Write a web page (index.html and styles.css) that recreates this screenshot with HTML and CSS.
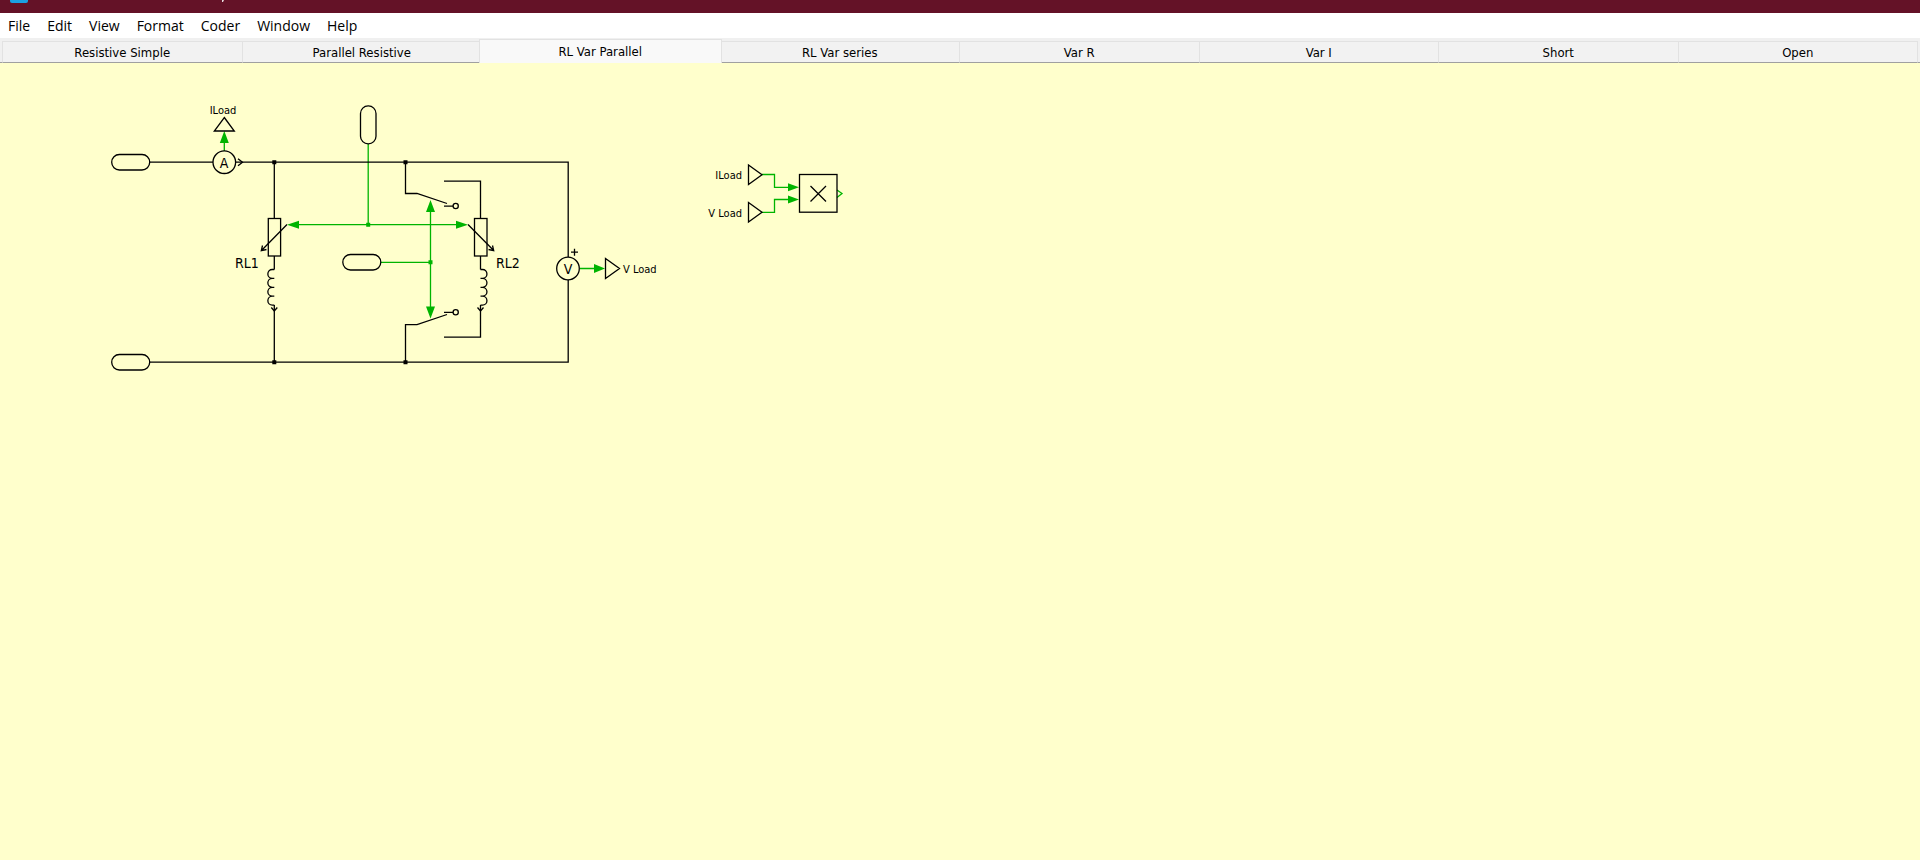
FILE: index.html
```html
<!DOCTYPE html>
<html lang="en">
<head>
<meta charset="utf-8">
<title>RL Var Parallel</title>
<link rel="stylesheet" href="styles.css">
</head>
<body>
<header class="titlebar">
  <svg class="titlebar-art" width="240" height="13" viewBox="0 0 240 13" aria-hidden="true">
    <path d="M10 0h18v1q0 2-2 2H12q-2 0-2-2z" fill="#1ba1e2"/>
    <path d="M222 0h2l-1 2h-1z" fill="#e8dcdf"/>
  </svg>
</header>
<nav class="menubar" aria-label="Main menu">
  <button class="menu-item">File</button>
  <button class="menu-item">Edit</button>
  <button class="menu-item">View</button>
  <button class="menu-item">Format</button>
  <button class="menu-item">Coder</button>
  <button class="menu-item">Window</button>
  <button class="menu-item">Help</button>
</nav>
<div class="tabs" role="tablist">
  <button class="tab" role="tab">Resistive Simple</button>
  <button class="tab" role="tab">Parallel Resistive</button>
  <button class="tab tab-active" role="tab" aria-selected="true">RL Var Parallel</button>
  <button class="tab" role="tab">RL Var series</button>
  <button class="tab" role="tab">Var R</button>
  <button class="tab" role="tab">Var I</button>
  <button class="tab" role="tab">Short</button>
  <button class="tab" role="tab">Open</button>
</div>
<main class="canvas">
  <svg class="schematic" width="900" height="340" viewBox="0 63 900 340" role="img" aria-label="RL Var Parallel schematic">
    <!-- signal wires -->
    <g class="signal">
      <path d="M224.3 151V141M368.200 144V224.700M297 224.700H458M381 262.300H430.500M430.500 210V308M580 268.500H596"/>
      <path d="M762 174.500H774.500V187.300H790M762 212.300H774.500V199.500H790M837 190l5 3.500l-5 4"/>
    </g>
    <g class="signal-fill">
      <path d="M224.300 131l4.500 12h-9zM287 224.700l12-4v8zM468 224.700l-12-4v8zM430.500 200l4.500 12h-9zM430.500 318.500l4.500-12h-9zM605 268.500l-11-4.500v9zM799 187.300l-11-4v8zM799 199.500l-11-4v8z"/>
      <path d="M366.200 222.700h4v4h-4zM428.500 260.300h4v4h-4z"/>
    </g>
    <!-- power wires -->
    <g class="wire">
      <path d="M150 162.200H213M236 162.200H568.200V257M568.200 280V362.200H150"/>
      <path d="M274.300 162.200V218.500M274.300 256V269.500M274.300 305V362.200"/>
      <path d="M405.500 162.200V193.500H417L447 203.500M444 206.200H453M444 181.200H480.500V218.500"/>
      <path d="M480.500 256V269.500M480.500 305V337.200H444M444 312.300H453M447 314.500L417 324.700H405.500V362.200"/>
    </g>
    <g class="node">
      <path d="M272.300 160.200h4v4h-4zM403.500 160.200h4v4h-4zM272.300 360.200h4v4h-4zM403.500 360.200h4v4h-4z"/>
    </g>
    <!-- components -->
    <g class="part">
      <rect x="111.700" y="154.500" width="38" height="15.500" rx="7.700"/>
      <rect x="111.700" y="354.500" width="38" height="15.500" rx="7.700"/>
      <rect x="342.800" y="254.500" width="38" height="15.500" rx="7.700"/>
      <rect x="360.500" y="105.900" width="15.500" height="38" rx="7.700"/>
      <circle cx="224.300" cy="162.200" r="11.300"/>
      <circle cx="568" cy="268.500" r="11.300"/>
      <path d="M224.300 117.500L234.300 131H214.300zM605.500 258.500V278.500L619.500 268.500zM748.500 165V184.500L762 174.700zM748.500 202.500V222L762 212.300z"/>
      <path d="M238 158.700l4.500 3.500l-4.500 3.500M571 252.200h7M574.500 248.700v7"/>
      <rect x="268.300" y="218.500" width="12.300" height="37.500"/>
      <rect x="474.500" y="218.500" width="12.500" height="37.500"/>
      <path d="M287 224.500L261.500 250.500M262.500 245.500L261.300 250.700L266.500 249.500"/>
      <path d="M468 224.500L493.700 250.500M492.500 245.500L493.700 250.700L488.500 249.500"/>
      <path d="M274.300 269.500h-2a4.450 4.450 0 0 0 0 8.900h2h-2a4.450 4.450 0 0 0 0 8.900h2h-2a4.450 4.450 0 0 0 0 8.900h2h-2a4.450 4.450 0 0 0 0 8.900h2M271.300 307.500l3 3.500l3-3.500"/>
      <path d="M480.500 269.500h2a4.450 4.450 0 0 1 0 8.900h-2h2a4.450 4.450 0 0 1 0 8.900h-2h2a4.450 4.450 0 0 1 0 8.900h-2h2a4.450 4.450 0 0 1 0 8.900h-2M477.500 307.500l3 3.500l3-3.500"/>
      <circle cx="455.700" cy="206" r="2.600"/>
      <circle cx="455.700" cy="312.300" r="2.600"/>
      <rect x="799.500" y="174.500" width="37.500" height="37.700"/>
      <path d="M810.500 186L826 201.500M826 186L810.500 201.500"/>
    </g>
    <!-- labels -->
    <g class="label">
      <text x="223" y="114" text-anchor="middle">ILoad</text>
      <text x="623" y="273">V Load</text>
      <text x="742" y="179" text-anchor="end">ILoad</text>
      <text x="742" y="217" text-anchor="end">V Load</text>
    </g>
    <g class="label-large">
      <text x="235" y="268">RL1</text>
      <text x="496" y="268">RL2</text>
    </g>
    <g class="meter" text-anchor="middle">
      <text x="224" y="168">A</text>
      <text x="568" y="274">V</text>
    </g>
  </svg>
</main>
</body>
</html>
```
FILE: styles.css
```css
body {
  margin: 0;
  min-height: 100vh;
  display: flex;
  flex-direction: column;
  background: #ffffcc;
  color: #000;
}

button {
  border: 0;
  margin: 0;
  padding: 0;
  background: none;
  color: inherit;
  font: inherit;
}

.titlebar {
  height: 13px;
  background: #641227;
}

.titlebar-art {
  display: block;
}

.menubar {
  display: flex;
  gap: 17px;
  height: 25px;
  padding: 0 8px;
  background: #fff;
  font: 14px/26px "Open Sans", sans-serif;
}

.tabs {
  display: flex;
  align-items: flex-end;
  box-sizing: border-box;
  height: 25px;
  padding: 1px 2px 0;
  background: linear-gradient(#a0a0a0, #a0a0a0) bottom / 100% 1px no-repeat #f0f0f0;
  font: 13px/20px "DejaVu Sans Condensed", "DejaVu Sans", sans-serif;
  font-stretch: condensed;
}

.tab {
  flex: 1 1 0;
  box-sizing: border-box;
  height: 22px;
  padding-top: 1px;
  border: 1px solid #e2e2e2;
  border-right-width: 0;
  border-bottom-color: #a0a0a0;
  background: #f2f2f2;
}

.tab:last-child {
  border-right-width: 1px;
}

.tab-active {
  height: 24px;
  margin: 0 -2px;
  flex-basis: 4px;
  border-right-width: 1px;
  border-bottom: 0;
  background: #f9f9f9;
  z-index: 1;
}

.canvas {
  flex: 1;
  overflow: auto;
}

.schematic {
  display: block;
}

.signal {
  fill: none;
  stroke: #00b400;
  stroke-width: 1.3;
}

.signal-fill {
  fill: #00b400;
}

.wire,
.part {
  fill: none;
  stroke: #000;
  stroke-width: 1.3;
}

.node {
  fill: #000;
}

.label,
.label-large,
.meter {
  font-family: "DejaVu Sans Condensed", "DejaVu Sans", sans-serif;
}

.label {
  font-size: 11px;
}

.label-large,
.meter {
  font-size: 14px;
}
```
